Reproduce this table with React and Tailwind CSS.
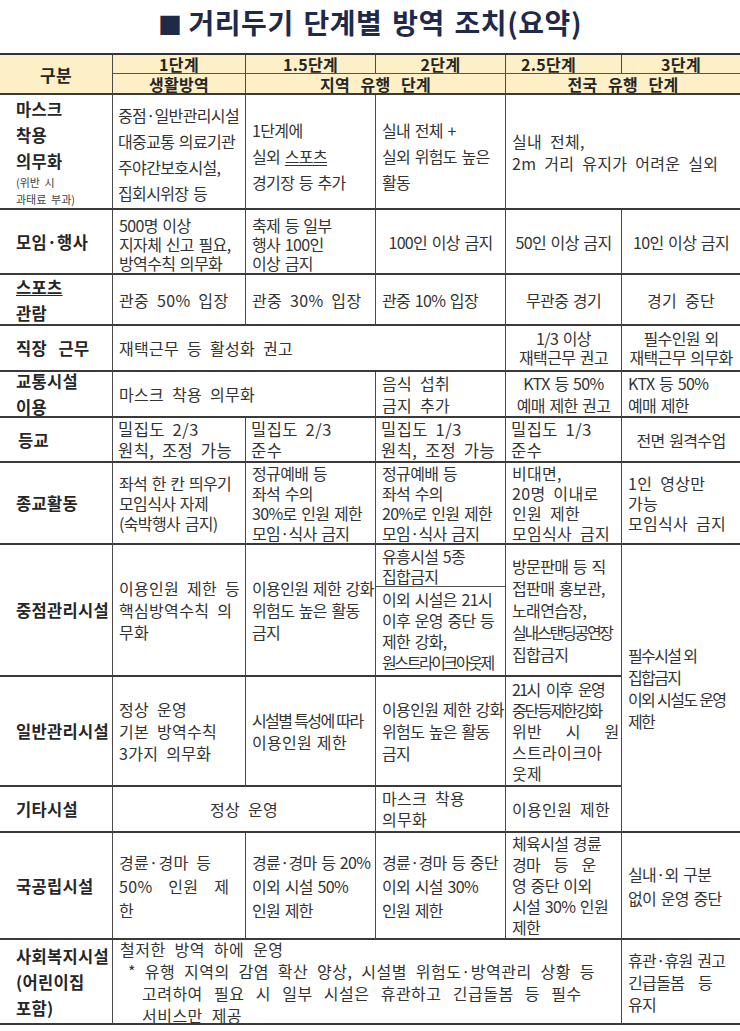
// 거리두기 단계별 방역 조치(요약) 표
const B = "border-b-2 border-b-[#3a3a3a]";
const L = "border-l border-l-[#4a4a4a]";
const base = "flex items-center overflow-hidden whitespace-nowrap text-[#333]";

const TR = {
  n: "tracking-[0.02em] [word-spacing:0.25em]",
  t1: "tracking-[-0.04em] [word-spacing:0.1em]",
  t2: "tracking-[-0.1em] [word-spacing:0.05em]",
  w: "tracking-[0.03em] [word-spacing:0.2em]",
};

function Label({ className, children }) {
  return (
    <div className={`${base} ${B} pl-[16px] font-bold text-[#262626] text-[16.5px] tracking-[0.02em] [word-spacing:0.45em] leading-[26px] ${className}`}>
      <div>{children}</div>
    </div>
  );
}

function Cell({ className, children, center, t = "n", s = "text-[16px]" }) {
  return (
    <div className={`${base} ${B} ${L} ${TR[t]} ${s} px-[6px] ${center ? "justify-center text-center" : ""} ${className}`}>
      <div>{children}</div>
    </div>
  );
}

const H = "bg-[#fdf0c6] flex items-center justify-center font-bold text-[16px] leading-none tracking-[0.02em] text-[#262626]";

export default function App() {
  return (
    <div className="w-[740px] h-[1031px] bg-white font-['Noto_Sans_CJK_KR',sans-serif] overflow-hidden">
      {/* 제목 */}
      <div className="h-[53px] flex items-center justify-center pb-[9px]">
        <h1 className="text-[28px] font-bold text-[#1f2a4b] tracking-[0.02em] [word-spacing:0.1em]">
          <span className="text-[24px] mr-[6px]">■</span>거리두기 단계별 방역 조치(요약)
        </h1>
      </div>

      <div className="grid grid-cols-[112px_133px_130px_130px_116px_119px] grid-rows-[19px_21px_115px_65px_51px_46px_46px_45px_82px_42px_90px_110px_46px_107px_85px] border-t-2 border-t-[#333]">
        {/* 헤더 */}
        <div className={`col-start-1 row-start-1 row-span-2 ${B} ${H} text-[17px]`}>구분</div>
        <div className={`col-start-2 row-start-1 ${L} border-b border-b-[#555] ${H}`}>1단계</div>
        <div className={`col-start-3 row-start-1 ${L} border-b border-b-[#555] ${H}`}>1.5단계</div>
        <div className={`col-start-4 row-start-1 ${L} border-b border-b-[#555] ${H}`}>2단계</div>
        <div className={`col-start-5 row-start-1 ${L} border-b border-b-[#555] ${H} pr-[30px]`}>2.5단계</div>
        <div className={`col-start-6 row-start-1 ${L} border-b border-b-[#555] ${H}`}>3단계</div>
        <div className={`col-start-2 row-start-2 ${L} ${B} ${H}`}>생활방역</div>
        <div className={`col-start-3 col-span-2 row-start-2 ${L} ${B} ${H} [word-spacing:0.4em]`}>지역 유행 단계</div>
        <div className={`col-start-5 col-span-2 row-start-2 ${L} ${B} ${H} [word-spacing:0.4em]`}>전국 유행 단계</div>

        {/* 마스크 착용 의무화 */}
        <Label className="col-start-1 row-start-3">
          마스크<br />착용<br />의무화
          <div className="font-normal text-[11px] leading-[17px] tracking-normal [word-spacing:0.2em] text-[#444]">(위반 시<br />과태료 부과)</div>
        </Label>
        <Cell t="t1" className="col-start-2 row-start-3 leading-[26px] pl-[5px] pt-[4px]">중점·일반관리시설<br />대중교통 의료기관<br />주야간보호시설,<br />집회시위장 등</Cell>
        <Cell t="t1" className="col-start-3 row-start-3 leading-[26px] pt-[8px]">1단계에<br />실외 <span className="underline underline-offset-2">스포츠</span><br />경기장 등 추가</Cell>
        <Cell t="t1" className="col-start-4 row-start-3 leading-[26px] pt-[8px]">실내 전체 +<br />실외 위험도 높은<br />활동</Cell>
        <Cell className="col-start-5 col-span-2 row-start-3 leading-[22px]">실내 전체,<br />2m 거리 유지가 어려운 실외</Cell>

        {/* 모임·행사 */}
        <Label className="col-start-1 row-start-4">모임·행사</Label>
        <Cell t="t1" className="col-start-2 row-start-4 leading-[19px] pt-[6px]">500명 이상<br />지자체 신고 필요,<br />방역수칙 의무화</Cell>
        <Cell t="t1" className="col-start-3 row-start-4 leading-[19px] pt-[6px]">축제 등 일부<br />행사 100인<br />이상 금지</Cell>
        <Cell t="t1" center className="col-start-4 row-start-4">100인 이상 금지</Cell>
        <Cell t="t1" center className="col-start-5 row-start-4">50인 이상 금지</Cell>
        <Cell t="t1" center className="col-start-6 row-start-4">10인 이상 금지</Cell>

        {/* 스포츠 관람 */}
        <Label className="col-start-1 row-start-5 leading-[26px]"><span className="underline underline-offset-1">스포츠</span><br />관람</Label>
        <Cell className="col-start-2 row-start-5">관중 50% 입장</Cell>
        <Cell className="col-start-3 row-start-5">관중 30% 입장</Cell>
        <Cell t="t1" className="col-start-4 row-start-5">관중 10% 입장</Cell>
        <Cell t="t1" center className="col-start-5 row-start-5">무관중 경기</Cell>
        <Cell center className="col-start-6 row-start-5">경기 중단</Cell>

        {/* 직장 근무 */}
        <Label className="col-start-1 row-start-6 pl-[15px]">직장 근무</Label>
        <Cell className="col-start-2 col-span-3 row-start-6">재택근무 등 활성화 권고</Cell>
        <Cell t="t1" center className="col-start-5 row-start-6 leading-[19px]">1/3 이상<br />재택근무 권고</Cell>
        <Cell t="t1" center className="col-start-6 row-start-6 leading-[19px]">필수인원 외<br />재택근무 의무화</Cell>

        {/* 교통시설 이용 */}
        <Label className="col-start-1 row-start-7 leading-[22px]">교통시설<br />이용</Label>
        <Cell className="col-start-2 col-span-2 row-start-7">마스크 착용 의무화</Cell>
        <Cell className="col-start-4 row-start-7 leading-[22px]">음식 섭취<br />금지 추가</Cell>
        <Cell t="t1" center className="col-start-5 row-start-7 leading-[22px]">KTX 등 50%<br />예매 제한 권고</Cell>
        <Cell t="t1" className="col-start-6 row-start-7 leading-[22px]">KTX 등 50%<br />예매 제한</Cell>

        {/* 등교 */}
        <Label className="col-start-1 row-start-8 pl-[18px]">등교</Label>
        <Cell t="w" s="text-[16.5px]" className="col-start-2 row-start-8 leading-[21px] pl-[5px]">밀집도 2/3<br />원칙, 조정 가능</Cell>
        <Cell t="w" s="text-[16.5px]" className="col-start-3 row-start-8 leading-[21px] pl-[5px]">밀집도 2/3<br />준수</Cell>
        <Cell t="w" s="text-[16.5px]" className="col-start-4 row-start-8 leading-[21px] pl-[5px]">밀집도 1/3<br />원칙, 조정 가능</Cell>
        <Cell t="w" s="text-[16.5px]" className="col-start-5 row-start-8 leading-[21px] pl-[5px]">밀집도 1/3<br />준수</Cell>
        <Cell t="t1" center className="col-start-6 row-start-8">전면 원격수업</Cell>

        {/* 종교활동 */}
        <Label className="col-start-1 row-start-9">종교활동</Label>
        <Cell t="t1" className="col-start-2 row-start-9 leading-[20px]">좌석 한 칸 띄우기<br />모임식사 자제<br />(숙박행사 금지)</Cell>
        <Cell t="t1" className="col-start-3 row-start-9 leading-[20px]">정규예배 등<br />좌석 수의<br />30%로 인원 제한<br />모임·식사 금지</Cell>
        <Cell t="t1" className="col-start-4 row-start-9 leading-[20px]">정규예배 등<br />좌석 수의<br />20%로 인원 제한<br />모임·식사 금지</Cell>
        <Cell className="col-start-5 row-start-9 leading-[20px]">비대면,<br />20명 이내로<br />인원 제한<br />모임식사 금지</Cell>
        <Cell className="col-start-6 row-start-9 leading-[20px]">1인 영상만<br />가능<br />모임식사 금지</Cell>

        {/* 중점관리시설 */}
        <Label className="col-start-1 row-start-10 row-span-2 pl-[11px]">중점관리시설</Label>
        <Cell className="col-start-2 row-start-10 row-span-2 leading-[22px]">이용인원 제한 등<br />핵심방역수칙 의<br />무화</Cell>
        <Cell t="t1" className="col-start-3 row-start-10 row-span-2 leading-[22px]">이용인원 제한 강화<br />위험도 높은 활동<br />금지</Cell>
        <div className={`${base} ${L} ${TR.t1} text-[16px] border-b border-b-[#555] px-[6px] col-start-4 row-start-10 leading-[20px]`}>
          <div>유흥시설 5종<br />집합금지</div>
        </div>
        <Cell t="t1" className="col-start-4 row-start-11 leading-[21px]">이외 시설은 21시<br />이후 운영 중단 등<br />제한 강화,<br /><span className="tracking-[-0.15em]">원스트라이크아웃제</span></Cell>
        <Cell t="t1" className="col-start-5 row-start-10 row-span-2 leading-[22px]">방문판매 등 직<br />접판매 홍보관,<br />노래연습장,<br /><span className="tracking-[-0.14em]">실내스탠딩공연장</span><br />집합금지</Cell>
        <Cell t="t2" className="col-start-6 row-start-10 row-span-4 leading-[22px]">필수시설 외<br />집합금지<br />이외 시설도 운영<br />제한</Cell>

        {/* 일반관리시설 */}
        <Label className="col-start-1 row-start-12 pl-[11px]">일반관리시설</Label>
        <Cell className="col-start-2 row-start-12 leading-[22px]">정상 운영<br />기본 방역수칙<br />3가지 의무화</Cell>
        <Cell t="t2" className="col-start-3 row-start-12 leading-[22px]">시설별 특성에 따라<br /><span className="tracking-[0.02em]">이용인원 제한</span></Cell>
        <Cell t="t1" className="col-start-4 row-start-12 leading-[22px]">이용인원 제한 강화<br />위험도 높은 활동<br />금지</Cell>
        <Cell className="col-start-5 row-start-12 leading-[21px]"><span className="tracking-[-0.1em]">21시 이후 운영</span><br /><span className="tracking-[-0.14em] [word-spacing:-0.05em]">중단 등 제한 강화</span><br />위반 &nbsp; 시 &nbsp; 원<br />스트라이크아<br />웃제</Cell>

        {/* 기타시설 */}
        <Label className="col-start-1 row-start-13">기타시설</Label>
        <Cell center className="col-start-2 col-span-2 row-start-13">정상 운영</Cell>
        <Cell className="col-start-4 row-start-13 leading-[21px]">마스크 착용<br />의무화</Cell>
        <Cell className="col-start-5 row-start-13">이용인원 제한</Cell>

        {/* 국공립시설 */}
        <Label className="col-start-1 row-start-14 pl-[12px]">국공립시설</Label>
        <Cell className="col-start-2 row-start-14 leading-[24px]">경륜·경마 등<br />50% &nbsp;인원 &nbsp;제<br />한</Cell>
        <Cell t="t1" className="col-start-3 row-start-14 leading-[24px]">경륜·경마 등 20%<br />이외 시설 50%<br />인원 제한</Cell>
        <Cell t="t1" className="col-start-4 row-start-14 leading-[24px]">경륜·경마 등 중단<br />이외 시설 30%<br />인원 제한</Cell>
        <Cell t="t1" className="col-start-5 row-start-14 leading-[21px]">체육시설 경륜<br />경마 &nbsp; 등 &nbsp; 운<br />영 중단 이외<br />시설 30% 인원<br />제한</Cell>
        <Cell t="t1" className="col-start-6 row-start-14 leading-[24px]">실내·외 구분<br />없이 운영 중단</Cell>

        {/* 사회복지시설 */}
        <Label className="col-start-1 row-start-15 pl-[5px] leading-[24px]">사회복지시설<br />(어린이집<br />포함)</Label>
        <div className={`${base} ${B} ${L} col-start-2 col-span-4 row-start-15 items-start px-[7px] text-[16px] leading-[22px] tracking-[0.03em] [word-spacing:0.3em]`}>
          <div className="-mt-[2px]">
            철저한 방역 하에 운영
            <div className="pl-[8px]">* 유행 지역의 감염 확산 양상, 시설별 위험도·방역관리 상황 등</div>
            <div className="pl-[22px] [word-spacing:0.45em]">고려하여 필요 시 일부 시설은 휴관하고 긴급돌봄 등 필수</div>
            <div className="pl-[22px]">서비스만 제공</div>
          </div>
        </div>
        <Cell t="t1" className="col-start-6 row-start-15 leading-[22px]">휴관·휴원 권고<br />긴급돌봄 &nbsp; 등<br />유지</Cell>
      </div>
    </div>
  );
}
